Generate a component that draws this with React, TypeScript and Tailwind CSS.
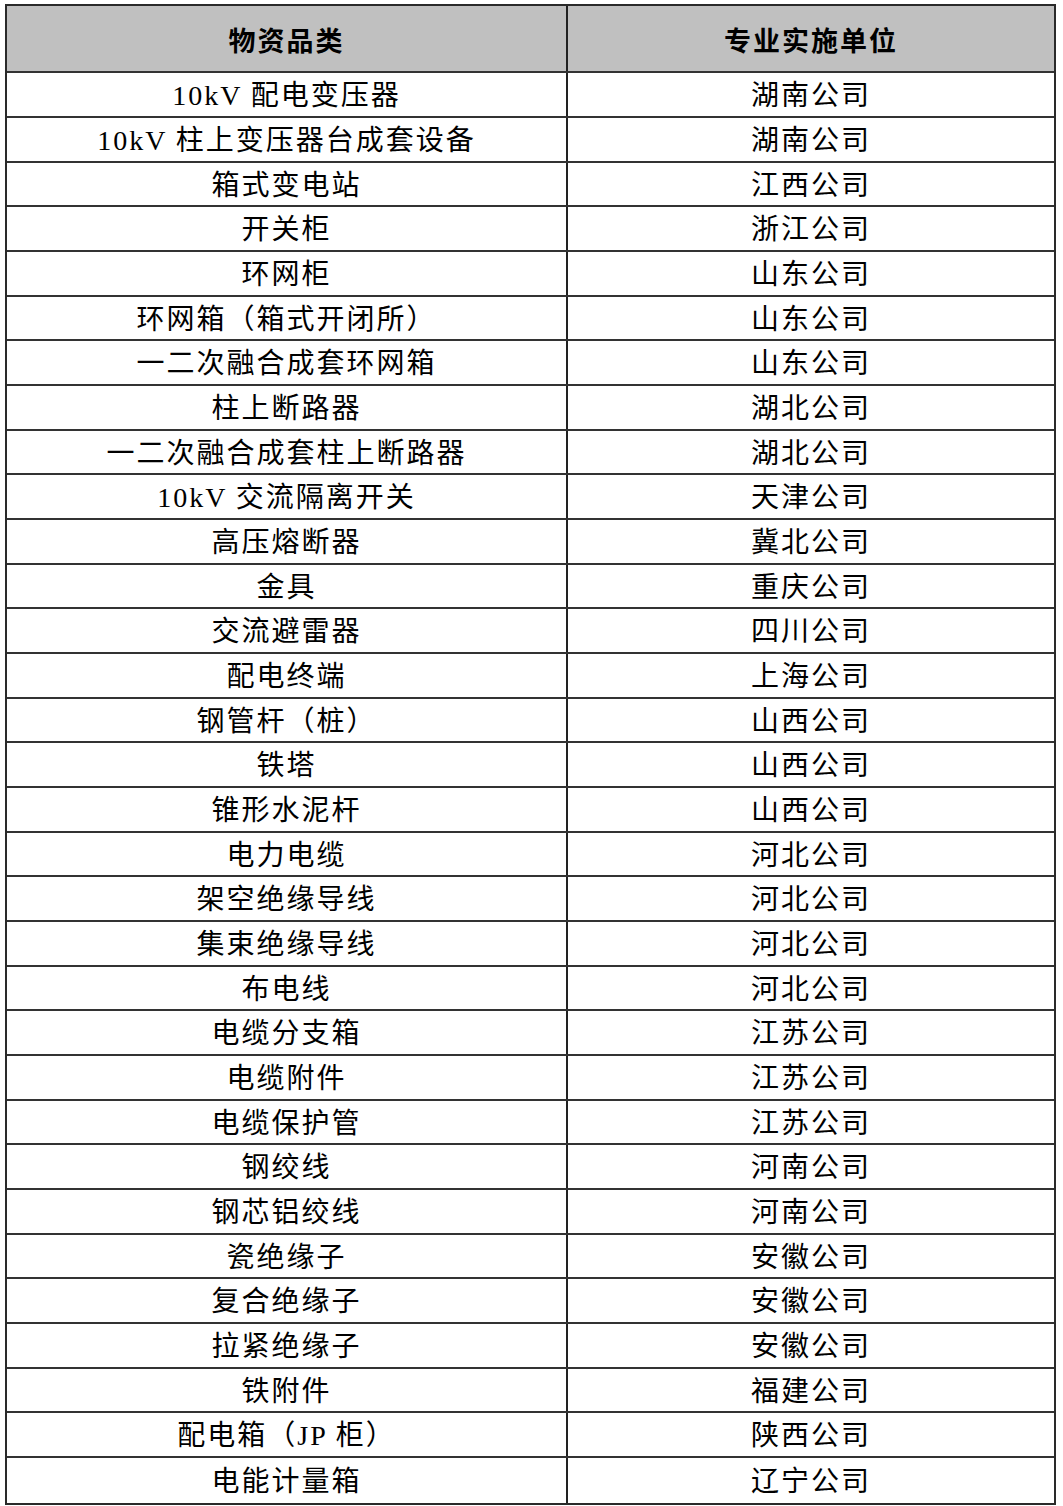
const rows = [
  ["10kV 配电变压器", "湖南公司"],
  ["10kV 柱上变压器台成套设备", "湖南公司"],
  ["箱式变电站", "江西公司"],
  ["开关柜", "浙江公司"],
  ["环网柜", "山东公司"],
  ["环网箱（箱式开闭所）", "山东公司"],
  ["一二次融合成套环网箱", "山东公司"],
  ["柱上断路器", "湖北公司"],
  ["一二次融合成套柱上断路器", "湖北公司"],
  ["10kV 交流隔离开关", "天津公司"],
  ["高压熔断器", "冀北公司"],
  ["金具", "重庆公司"],
  ["交流避雷器", "四川公司"],
  ["配电终端", "上海公司"],
  ["钢管杆（桩）", "山西公司"],
  ["铁塔", "山西公司"],
  ["锥形水泥杆", "山西公司"],
  ["电力电缆", "河北公司"],
  ["架空绝缘导线", "河北公司"],
  ["集束绝缘导线", "河北公司"],
  ["布电线", "河北公司"],
  ["电缆分支箱", "江苏公司"],
  ["电缆附件", "江苏公司"],
  ["电缆保护管", "江苏公司"],
  ["钢绞线", "河南公司"],
  ["钢芯铝绞线", "河南公司"],
  ["瓷绝缘子", "安徽公司"],
  ["复合绝缘子", "安徽公司"],
  ["拉紧绝缘子", "安徽公司"],
  ["铁附件", "福建公司"],
  ["配电箱（JP 柜）", "陕西公司"],
  ["电能计量箱", "辽宁公司"],
];

const serif = "font-['Liberation_Serif','Noto_Sans_CJK_SC',serif]";

export default function App() {
  return (
    <div className="w-[1063px] h-[1506px] bg-white pt-[4px] pl-[5px]">
      <div className="w-[1051px] border-2 border-[#2a2a2a] text-black">
        <div className="flex h-[67px] bg-[#c0c0c0] border-b-2 border-[#333]">
          <div className="w-[561px] shrink-0 border-r-2 border-[#222] flex items-center justify-center pt-[4px] font-['Noto_Sans_CJK_SC',sans-serif] font-bold text-[27px] tracking-[2px]">
            物资品类
          </div>
          <div className="flex-1 flex items-center justify-center pt-[4px] font-['Noto_Sans_CJK_SC',sans-serif] font-bold text-[27px] tracking-[2px]">
            专业实施单位
          </div>
        </div>
        {rows.map((r, i) => (
          <div
            key={i}
            className={`flex ${i % 3 === 2 ? "h-[44px]" : "h-[45px]"} ${i === rows.length - 1 ? "" : "border-b-2 border-[#333]"}`}
          >
            <div className={`w-[561px] shrink-0 border-r-2 border-[#222] flex items-center justify-center pt-[3px] ${serif} text-[28px] tracking-[2px] leading-none`}>
              {r[0]}
            </div>
            <div className={`flex-1 flex items-center justify-center pt-[3px] ${serif} text-[28px] tracking-[2px] leading-none`}>
              {r[1]}
            </div>
          </div>
        ))}
      </div>
    </div>
  );
}
